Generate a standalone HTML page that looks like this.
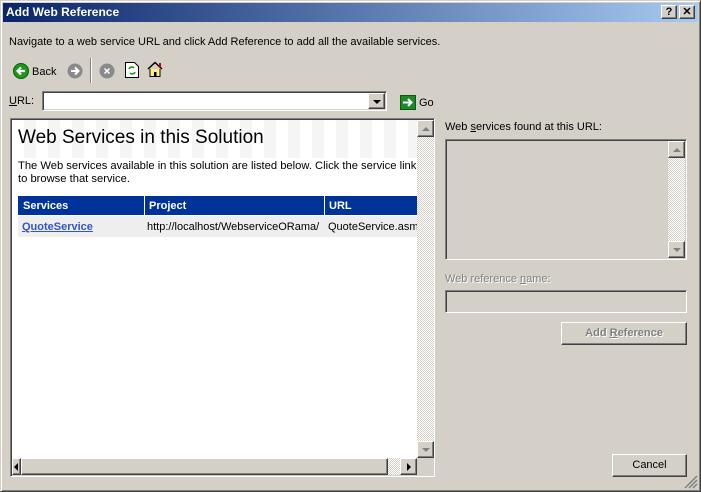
<!DOCTYPE html>
<html><head><style>
*{margin:0;padding:0;box-sizing:border-box}
body{width:701px;height:492px;background:#d4d0c8;font-family:"Liberation Sans",Arial,sans-serif;font-size:11px;color:#000;position:relative;overflow:hidden}
.a{position:absolute;white-space:nowrap}
.sunk{border:1px solid;border-color:#808080 #fff #fff #808080;box-shadow:inset 1px 1px 0 #404040,inset -1px -1px 0 #d4d0c8}
.btn{border:1px solid;border-color:#fff #404040 #404040 #fff;box-shadow:inset -1px -1px 0 #808080;background:#d4d0c8;text-align:center}
.track{background-color:#eee;background-image:repeating-conic-gradient(#d4d0c8 0 25%,#fff 0 50%);background-size:2px 2px}
.arr{width:0;height:0;position:absolute}
</style></head><body>
<div class="a" style="left:0;top:0;width:701px;height:492px;border:1px solid;border-color:#d4d0c8 #404040 #404040 #d4d0c8;box-shadow:inset 1px 1px 0 #fff,inset -1px -1px 0 #808080"></div>
<div class="a" style="left:3px;top:3px;width:695px;height:19px;background:linear-gradient(90deg,#0a246a,#a6caf0)"></div>
<div class="a" style="left:6px;top:5px;color:#fff;font-weight:bold;font-size:12px">Add Web Reference</div>
<div class="a btn" style="left:661px;top:5px;width:16px;height:14px;font-weight:bold;line-height:12px">?</div>
<div class="a btn" style="left:679px;top:5px;width:16px;height:14px;font-weight:bold;line-height:12px">✕</div>
<div class="a" style="left:9px;top:36px">Navigate to a web service URL and click Add Reference to add all the available services.</div>
<svg class="a" style="left:12px;top:62px" width="18" height="18"><circle cx="9" cy="9" r="7.5" fill="#1a9a1a" stroke="#0b5a0b"/><path d="M13 9H6M9 5.5 5.5 9 9 12.5" stroke="#fff" stroke-width="2.2" fill="none"/></svg>
<div class="a" style="left:32px;top:66px">Back</div>
<svg class="a" style="left:66px;top:62px" width="18" height="18"><circle cx="9" cy="9" r="7.5" fill="#8a8a8a"/><path d="M5 9h7M9 5.5 12.5 9 9 12.5" stroke="#fff" stroke-width="2" fill="none"/></svg>
<div class="a" style="left:90px;top:58px;width:2px;height:25px;border-left:1px solid #808080;border-right:1px solid #fff"></div>
<svg class="a" style="left:98px;top:62px" width="18" height="18"><circle cx="9" cy="9" r="7.5" fill="#8a8a8a"/><path d="M6.5 6.5l5 5M11.5 6.5l-5 5" stroke="#fff" stroke-width="1.5"/></svg>
<svg class="a" style="left:124px;top:61px" width="16" height="18"><path d="M1.5 1.5h9l4 4v11h-13z" fill="#fff" stroke="#000"/><path d="M5 8a3 3 0 0 1 5-1M11 11a3 3 0 0 1-5 1" stroke="#1a9a1a" stroke-width="1.6" fill="none"/></svg>
<svg class="a" style="left:147px;top:61px" width="16" height="17"><path d="M1 8 8 1.5 15 8" fill="none" stroke="#000" stroke-width="1.5"/><path d="M3 8v7.5h10V8" fill="#ffef80" stroke="#000"/><rect x="7" y="11" width="2.5" height="4.5" fill="#000"/><rect x="12" y="2" width="2" height="4" fill="#c00"/></svg>
<div class="a" style="left:9px;top:95px"><u>U</u>RL:</div>
<div class="a sunk" style="left:42px;top:91px;width:345px;height:20px;background:#fff"></div>
<div class="a btn" style="left:368px;top:93px;width:17px;height:16px"><div class="arr" style="left:4px;top:6px;border:4px solid transparent;border-top:4px solid #000;border-bottom:0"></div></div>
<svg class="a" style="left:400px;top:95px" width="16" height="15"><rect x=".5" y=".5" width="15" height="14" fill="#1a8a2a" stroke="#0b5a0b"/><path d="M3 7.5h8M8 4l3.5 3.5L8 11" stroke="#fff" stroke-width="2" fill="none"/></svg>
<div class="a" style="left:419px;top:97px">Go</div>
<div class="a sunk" style="left:10px;top:118px;width:425px;height:359px;background:#fff"></div>
<div class="a" style="left:12px;top:120px;width:405px;height:38px;background:repeating-linear-gradient(90deg,#fff 0 12px,#f5f5f5 12px 24px)"></div>
<div class="a" style="left:18px;top:127px;font-size:19px">Web Services in this Solution</div>
<div class="a" style="left:18px;top:160px;width:405px;line-height:13px;white-space:normal;font-size:11.2px">The Web services available in this solution are listed below. Click the service link to browse that service.</div>
<div class="a" style="left:18px;top:196px;width:399px;height:19px;background:#003399"></div>
<div class="a" style="left:144px;top:196px;width:1px;height:19px;background:#fff"></div>
<div class="a" style="left:324px;top:196px;width:1px;height:19px;background:#fff"></div>
<div class="a" style="left:23px;top:200px;color:#fff;font-weight:bold">Services</div>
<div class="a" style="left:149px;top:200px;color:#fff;font-weight:bold">Project</div>
<div class="a" style="left:329px;top:200px;color:#fff;font-weight:bold">URL</div>
<div class="a" style="left:18px;top:216px;width:399px;height:21px;background:#eeeeee"></div>
<div class="a" style="left:22px;top:221px;color:#3355cc;font-weight:bold;text-decoration:underline">QuoteService</div>
<div class="a" style="left:147px;top:221px;width:175px;overflow:hidden">http://localhost/WebserviceORama/</div>
<div class="a" style="left:328px;top:221px;width:89px;overflow:hidden">QuoteService.asmx</div>
<div class="a track" style="left:417px;top:120px;width:17px;height:338px"></div>
<div class="a btn" style="left:417px;top:120px;width:17px;height:17px"><div class="arr" style="left:4px;top:6px;border:4px solid transparent;border-bottom:4px solid #808080;border-top:0"></div></div>
<div class="a btn" style="left:417px;top:441px;width:17px;height:17px"><div class="arr" style="left:4px;top:6px;border:4px solid transparent;border-top:4px solid #808080;border-bottom:0"></div></div>
<div class="a" style="left:12px;top:458px;width:422px;height:18px;background:#d4d0c8"></div>
<div class="a track" style="left:388px;top:458px;width:12px;height:17px"></div>
<div class="a btn" style="left:12px;top:458px;width:9px;height:17px"><div class="arr" style="left:1px;top:4px;border:4px solid transparent;border-right:4px solid #000;border-left:0"></div></div>
<div class="a btn" style="left:21px;top:458px;width:367px;height:17px"></div>
<div class="a btn" style="left:400px;top:458px;width:17px;height:17px"><div class="arr" style="left:6px;top:4px;border:4px solid transparent;border-left:4px solid #000;border-right:0"></div></div>
<div class="a" style="left:445px;top:121px">Web <u>s</u>ervices found at this URL:</div>
<div class="a sunk" style="left:445px;top:139px;width:242px;height:121px"></div>
<div class="a track" style="left:668px;top:141px;width:17px;height:117px"></div>
<div class="a btn" style="left:668px;top:141px;width:17px;height:17px"><div class="arr" style="left:4px;top:6px;border:4px solid transparent;border-bottom:4px solid #808080;border-top:0"></div></div>
<div class="a btn" style="left:668px;top:241px;width:17px;height:17px"><div class="arr" style="left:4px;top:6px;border:4px solid transparent;border-top:4px solid #808080;border-bottom:0"></div></div>
<div class="a" style="left:445px;top:273px;color:#808080;text-shadow:1px 1px 0 #fff">Web reference <u>n</u>ame:</div>
<div class="a sunk" style="left:445px;top:290px;width:242px;height:23px"></div>
<div class="a btn" style="left:561px;top:322px;width:126px;height:23px;line-height:20px;color:#808080;font-weight:bold;text-shadow:1px 1px 0 #fff">Add <u>R</u>eference</div>
<div class="a btn" style="left:612px;top:454px;width:75px;height:23px;line-height:21px">Cancel</div>
<svg class="a" style="left:684px;top:475px" width="14" height="14"><path d="M13 1 1 13M13 5 5 13M13 9 9 13" stroke="#808080" stroke-width="1.5"/></svg>
</body></html>
